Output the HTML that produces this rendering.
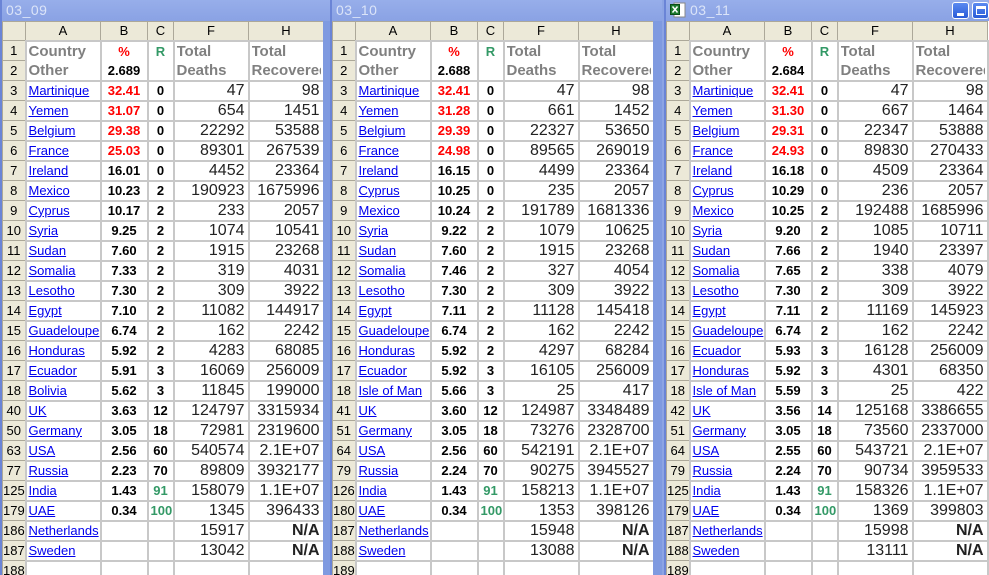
<!DOCTYPE html>
<html><head><meta charset="utf-8"><style>
*{margin:0;padding:0;box-sizing:border-box}
body{width:989px;height:575px;overflow:hidden;background:#8ca4e4;font-family:"Liberation Sans",Arial,sans-serif;position:relative}
.win{position:absolute;top:0;height:575px;width:332px;overflow:hidden;background:#7f9ae0;border-left:2px solid #6a84d6}
.title{position:absolute;left:0;top:0;width:100%;height:21px;background:linear-gradient(#97aeea,#8aa2e4);color:#dbe4f8;font-size:14px;line-height:20px;padding-left:4px;letter-spacing:0.5px}
.grid{position:absolute;left:0;top:21px;width:321px;height:560px;background:#fff;overflow:hidden}
table{border-collapse:collapse;table-layout:fixed;width:321px}
td{border:2px solid #c8c8c8;height:20px;padding:0 2px;white-space:nowrap;overflow:hidden;font-size:13px;line-height:16px}
tr.h td{background:#ece9d8;border:1px solid #aca899;height:19px;text-align:center;font-size:13px;color:#000}
td.rh{background:#ece9d8;border:1px solid #aca899;text-align:center;font-size:13px;padding:0;color:#000}
td.a a{color:#0000ee;text-decoration:underline}
td.b{text-align:center;font-weight:bold}
td.c{text-align:center;font-weight:bold}
td.r{color:#ff0000}
td.g{color:#339966}
td.n{text-align:right;font-size:16px;color:#222;padding-right:3px}
td.hd{color:#808080;font-weight:bold;font-size:15px;vertical-align:top;padding:0 2px}
td.hd div,td.tp div{height:38px;line-height:19px;overflow:hidden;white-space:nowrap}
td.tp{vertical-align:top}
td.na{font-weight:bold}
.btn{position:absolute;top:2px;width:17px;height:17px;border:1px solid #fff;border-radius:3px;background:linear-gradient(#5b8af0,#2a5bd8)}
</style></head><body>

<div class="win" style="left:0">
<div class="title">03_09</div>
<div class="grid"><table>
<colgroup><col style="width:23px"><col style="width:75px"><col style="width:47px"><col style="width:26px"><col style="width:75px"><col style="width:75px"></colgroup>
<tr class="h"><td></td><td>A</td><td>B</td><td>C</td><td>F</td><td>H</td></tr>
<tr><td class="rh">1</td><td class="hd" rowspan="2"><div>Country<br>Other</div></td><td class="b tp" rowspan="2"><div><span style="color:#f00">%</span><br>2.689</div></td><td class="c g tp" rowspan="2"><div>R</div></td><td class="hd" rowspan="2"><div>Total<br>Deaths</div></td><td class="hd" rowspan="2"><div>Total<br>Recovered</div></td></tr>
<tr><td class="rh">2</td></tr>
<tr><td class="rh">3</td><td class="a"><a>Martinique</a></td><td class="b r">32.41</td><td class="c">0</td><td class="n">47</td><td class="n">98</td></tr>
<tr><td class="rh">4</td><td class="a"><a>Yemen</a></td><td class="b r">31.07</td><td class="c">0</td><td class="n">654</td><td class="n">1451</td></tr>
<tr><td class="rh">5</td><td class="a"><a>Belgium</a></td><td class="b r">29.38</td><td class="c">0</td><td class="n">22292</td><td class="n">53588</td></tr>
<tr><td class="rh">6</td><td class="a"><a>France</a></td><td class="b r">25.03</td><td class="c">0</td><td class="n">89301</td><td class="n">267539</td></tr>
<tr><td class="rh">7</td><td class="a"><a>Ireland</a></td><td class="b">16.01</td><td class="c">0</td><td class="n">4452</td><td class="n">23364</td></tr>
<tr><td class="rh">8</td><td class="a"><a>Mexico</a></td><td class="b">10.23</td><td class="c">2</td><td class="n">190923</td><td class="n">1675996</td></tr>
<tr><td class="rh">9</td><td class="a"><a>Cyprus</a></td><td class="b">10.17</td><td class="c">2</td><td class="n">233</td><td class="n">2057</td></tr>
<tr><td class="rh">10</td><td class="a"><a>Syria</a></td><td class="b">9.25</td><td class="c">2</td><td class="n">1074</td><td class="n">10541</td></tr>
<tr><td class="rh">11</td><td class="a"><a>Sudan</a></td><td class="b">7.60</td><td class="c">2</td><td class="n">1915</td><td class="n">23268</td></tr>
<tr><td class="rh">12</td><td class="a"><a>Somalia</a></td><td class="b">7.33</td><td class="c">2</td><td class="n">319</td><td class="n">4031</td></tr>
<tr><td class="rh">13</td><td class="a"><a>Lesotho</a></td><td class="b">7.30</td><td class="c">2</td><td class="n">309</td><td class="n">3922</td></tr>
<tr><td class="rh">14</td><td class="a"><a>Egypt</a></td><td class="b">7.10</td><td class="c">2</td><td class="n">11082</td><td class="n">144917</td></tr>
<tr><td class="rh">15</td><td class="a"><a>Guadeloupe</a></td><td class="b">6.74</td><td class="c">2</td><td class="n">162</td><td class="n">2242</td></tr>
<tr><td class="rh">16</td><td class="a"><a>Honduras</a></td><td class="b">5.92</td><td class="c">2</td><td class="n">4283</td><td class="n">68085</td></tr>
<tr><td class="rh">17</td><td class="a"><a>Ecuador</a></td><td class="b">5.91</td><td class="c">3</td><td class="n">16069</td><td class="n">256009</td></tr>
<tr><td class="rh">18</td><td class="a"><a>Bolivia</a></td><td class="b">5.62</td><td class="c">3</td><td class="n">11845</td><td class="n">199000</td></tr>
<tr><td class="rh">40</td><td class="a"><a>UK</a></td><td class="b">3.63</td><td class="c">12</td><td class="n">124797</td><td class="n">3315934</td></tr>
<tr><td class="rh">50</td><td class="a"><a>Germany</a></td><td class="b">3.05</td><td class="c">18</td><td class="n">72981</td><td class="n">2319600</td></tr>
<tr><td class="rh">63</td><td class="a"><a>USA</a></td><td class="b">2.56</td><td class="c">60</td><td class="n">540574</td><td class="n">2.1E+07</td></tr>
<tr><td class="rh">77</td><td class="a"><a>Russia</a></td><td class="b">2.23</td><td class="c">70</td><td class="n">89809</td><td class="n">3932177</td></tr>
<tr><td class="rh">125</td><td class="a"><a>India</a></td><td class="b">1.43</td><td class="c g">91</td><td class="n">158079</td><td class="n">1.1E+07</td></tr>
<tr><td class="rh">179</td><td class="a"><a>UAE</a></td><td class="b">0.34</td><td class="c g">100</td><td class="n">1345</td><td class="n">396433</td></tr>
<tr><td class="rh">186</td><td class="a"><a>Netherlands</a></td><td></td><td></td><td class="n">15917</td><td class="n na">N/A</td></tr>
<tr><td class="rh">187</td><td class="a"><a>Sweden</a></td><td></td><td></td><td class="n">13042</td><td class="n na">N/A</td></tr>
<tr><td class="rh">188</td><td></td><td></td><td></td><td></td><td></td></tr>
</table></div>
</div>

<div class="win" style="left:330px">
<div class="title">03_10</div>
<div class="grid"><table>
<colgroup><col style="width:23px"><col style="width:75px"><col style="width:47px"><col style="width:26px"><col style="width:75px"><col style="width:75px"></colgroup>
<tr class="h"><td></td><td>A</td><td>B</td><td>C</td><td>F</td><td>H</td></tr>
<tr><td class="rh">1</td><td class="hd" rowspan="2"><div>Country<br>Other</div></td><td class="b tp" rowspan="2"><div><span style="color:#f00">%</span><br>2.688</div></td><td class="c g tp" rowspan="2"><div>R</div></td><td class="hd" rowspan="2"><div>Total<br>Deaths</div></td><td class="hd" rowspan="2"><div>Total<br>Recovered</div></td></tr>
<tr><td class="rh">2</td></tr>
<tr><td class="rh">3</td><td class="a"><a>Martinique</a></td><td class="b r">32.41</td><td class="c">0</td><td class="n">47</td><td class="n">98</td></tr>
<tr><td class="rh">4</td><td class="a"><a>Yemen</a></td><td class="b r">31.28</td><td class="c">0</td><td class="n">661</td><td class="n">1452</td></tr>
<tr><td class="rh">5</td><td class="a"><a>Belgium</a></td><td class="b r">29.39</td><td class="c">0</td><td class="n">22327</td><td class="n">53650</td></tr>
<tr><td class="rh">6</td><td class="a"><a>France</a></td><td class="b r">24.98</td><td class="c">0</td><td class="n">89565</td><td class="n">269019</td></tr>
<tr><td class="rh">7</td><td class="a"><a>Ireland</a></td><td class="b">16.15</td><td class="c">0</td><td class="n">4499</td><td class="n">23364</td></tr>
<tr><td class="rh">8</td><td class="a"><a>Cyprus</a></td><td class="b">10.25</td><td class="c">0</td><td class="n">235</td><td class="n">2057</td></tr>
<tr><td class="rh">9</td><td class="a"><a>Mexico</a></td><td class="b">10.24</td><td class="c">2</td><td class="n">191789</td><td class="n">1681336</td></tr>
<tr><td class="rh">10</td><td class="a"><a>Syria</a></td><td class="b">9.22</td><td class="c">2</td><td class="n">1079</td><td class="n">10625</td></tr>
<tr><td class="rh">11</td><td class="a"><a>Sudan</a></td><td class="b">7.60</td><td class="c">2</td><td class="n">1915</td><td class="n">23268</td></tr>
<tr><td class="rh">12</td><td class="a"><a>Somalia</a></td><td class="b">7.46</td><td class="c">2</td><td class="n">327</td><td class="n">4054</td></tr>
<tr><td class="rh">13</td><td class="a"><a>Lesotho</a></td><td class="b">7.30</td><td class="c">2</td><td class="n">309</td><td class="n">3922</td></tr>
<tr><td class="rh">14</td><td class="a"><a>Egypt</a></td><td class="b">7.11</td><td class="c">2</td><td class="n">11128</td><td class="n">145418</td></tr>
<tr><td class="rh">15</td><td class="a"><a>Guadeloupe</a></td><td class="b">6.74</td><td class="c">2</td><td class="n">162</td><td class="n">2242</td></tr>
<tr><td class="rh">16</td><td class="a"><a>Honduras</a></td><td class="b">5.92</td><td class="c">2</td><td class="n">4297</td><td class="n">68284</td></tr>
<tr><td class="rh">17</td><td class="a"><a>Ecuador</a></td><td class="b">5.92</td><td class="c">3</td><td class="n">16105</td><td class="n">256009</td></tr>
<tr><td class="rh">18</td><td class="a"><a>Isle of Man</a></td><td class="b">5.66</td><td class="c">3</td><td class="n">25</td><td class="n">417</td></tr>
<tr><td class="rh">41</td><td class="a"><a>UK</a></td><td class="b">3.60</td><td class="c">12</td><td class="n">124987</td><td class="n">3348489</td></tr>
<tr><td class="rh">51</td><td class="a"><a>Germany</a></td><td class="b">3.05</td><td class="c">18</td><td class="n">73276</td><td class="n">2328700</td></tr>
<tr><td class="rh">64</td><td class="a"><a>USA</a></td><td class="b">2.56</td><td class="c">60</td><td class="n">542191</td><td class="n">2.1E+07</td></tr>
<tr><td class="rh">79</td><td class="a"><a>Russia</a></td><td class="b">2.24</td><td class="c">70</td><td class="n">90275</td><td class="n">3945527</td></tr>
<tr><td class="rh">126</td><td class="a"><a>India</a></td><td class="b">1.43</td><td class="c g">91</td><td class="n">158213</td><td class="n">1.1E+07</td></tr>
<tr><td class="rh">180</td><td class="a"><a>UAE</a></td><td class="b">0.34</td><td class="c g">100</td><td class="n">1353</td><td class="n">398126</td></tr>
<tr><td class="rh">187</td><td class="a"><a>Netherlands</a></td><td></td><td></td><td class="n">15948</td><td class="n na">N/A</td></tr>
<tr><td class="rh">188</td><td class="a"><a>Sweden</a></td><td></td><td></td><td class="n">13088</td><td class="n na">N/A</td></tr>
<tr><td class="rh">189</td><td></td><td></td><td></td><td></td><td></td></tr>
</table></div>
</div>

<div class="win" style="left:664px;width:325px">
<div class="title" style="padding-left:24px">03_11</div>
<svg style="position:absolute;left:4px;top:2px" width="16" height="16" viewBox="0 0 16 16"><rect x="4" y="1" width="11" height="14" fill="#fff" stroke="#888"/><rect x="0.5" y="2.5" width="9" height="10" fill="#1e7b2e" stroke="#0b4d18"/><path d="M2.5 4.5 L7.5 10.5 M7.5 4.5 L2.5 10.5" stroke="#fff" stroke-width="1.5"/></svg>
<div class="btn" style="left:286px"><div style="position:absolute;left:4px;top:10px;width:7px;height:3px;background:#fff"></div></div>
<div class="btn" style="left:306px"><div style="position:absolute;left:3px;top:3px;width:10px;height:9px;border:1px solid #fff;border-top:3px solid #fff"></div></div>
<div class="grid" style="width:330px"><table>
<colgroup><col style="width:23px"><col style="width:75px"><col style="width:47px"><col style="width:26px"><col style="width:75px"><col style="width:75px"></colgroup>
<tr class="h"><td></td><td>A</td><td>B</td><td>C</td><td>F</td><td>H</td></tr>
<tr><td class="rh">1</td><td class="hd" rowspan="2"><div>Country<br>Other</div></td><td class="b tp" rowspan="2"><div><span style="color:#f00">%</span><br>2.684</div></td><td class="c g tp" rowspan="2"><div>R</div></td><td class="hd" rowspan="2"><div>Total<br>Deaths</div></td><td class="hd" rowspan="2"><div>Total<br>Recovered</div></td></tr>
<tr><td class="rh">2</td></tr>
<tr><td class="rh">3</td><td class="a"><a>Martinique</a></td><td class="b r">32.41</td><td class="c">0</td><td class="n">47</td><td class="n">98</td></tr>
<tr><td class="rh">4</td><td class="a"><a>Yemen</a></td><td class="b r">31.30</td><td class="c">0</td><td class="n">667</td><td class="n">1464</td></tr>
<tr><td class="rh">5</td><td class="a"><a>Belgium</a></td><td class="b r">29.31</td><td class="c">0</td><td class="n">22347</td><td class="n">53888</td></tr>
<tr><td class="rh">6</td><td class="a"><a>France</a></td><td class="b r">24.93</td><td class="c">0</td><td class="n">89830</td><td class="n">270433</td></tr>
<tr><td class="rh">7</td><td class="a"><a>Ireland</a></td><td class="b">16.18</td><td class="c">0</td><td class="n">4509</td><td class="n">23364</td></tr>
<tr><td class="rh">8</td><td class="a"><a>Cyprus</a></td><td class="b">10.29</td><td class="c">0</td><td class="n">236</td><td class="n">2057</td></tr>
<tr><td class="rh">9</td><td class="a"><a>Mexico</a></td><td class="b">10.25</td><td class="c">2</td><td class="n">192488</td><td class="n">1685996</td></tr>
<tr><td class="rh">10</td><td class="a"><a>Syria</a></td><td class="b">9.20</td><td class="c">2</td><td class="n">1085</td><td class="n">10711</td></tr>
<tr><td class="rh">11</td><td class="a"><a>Sudan</a></td><td class="b">7.66</td><td class="c">2</td><td class="n">1940</td><td class="n">23397</td></tr>
<tr><td class="rh">12</td><td class="a"><a>Somalia</a></td><td class="b">7.65</td><td class="c">2</td><td class="n">338</td><td class="n">4079</td></tr>
<tr><td class="rh">13</td><td class="a"><a>Lesotho</a></td><td class="b">7.30</td><td class="c">2</td><td class="n">309</td><td class="n">3922</td></tr>
<tr><td class="rh">14</td><td class="a"><a>Egypt</a></td><td class="b">7.11</td><td class="c">2</td><td class="n">11169</td><td class="n">145923</td></tr>
<tr><td class="rh">15</td><td class="a"><a>Guadeloupe</a></td><td class="b">6.74</td><td class="c">2</td><td class="n">162</td><td class="n">2242</td></tr>
<tr><td class="rh">16</td><td class="a"><a>Ecuador</a></td><td class="b">5.93</td><td class="c">3</td><td class="n">16128</td><td class="n">256009</td></tr>
<tr><td class="rh">17</td><td class="a"><a>Honduras</a></td><td class="b">5.92</td><td class="c">3</td><td class="n">4301</td><td class="n">68350</td></tr>
<tr><td class="rh">18</td><td class="a"><a>Isle of Man</a></td><td class="b">5.59</td><td class="c">3</td><td class="n">25</td><td class="n">422</td></tr>
<tr><td class="rh">42</td><td class="a"><a>UK</a></td><td class="b">3.56</td><td class="c">14</td><td class="n">125168</td><td class="n">3386655</td></tr>
<tr><td class="rh">51</td><td class="a"><a>Germany</a></td><td class="b">3.05</td><td class="c">18</td><td class="n">73560</td><td class="n">2337000</td></tr>
<tr><td class="rh">64</td><td class="a"><a>USA</a></td><td class="b">2.55</td><td class="c">60</td><td class="n">543721</td><td class="n">2.1E+07</td></tr>
<tr><td class="rh">79</td><td class="a"><a>Russia</a></td><td class="b">2.24</td><td class="c">70</td><td class="n">90734</td><td class="n">3959533</td></tr>
<tr><td class="rh">125</td><td class="a"><a>India</a></td><td class="b">1.43</td><td class="c g">91</td><td class="n">158326</td><td class="n">1.1E+07</td></tr>
<tr><td class="rh">179</td><td class="a"><a>UAE</a></td><td class="b">0.34</td><td class="c g">100</td><td class="n">1369</td><td class="n">399803</td></tr>
<tr><td class="rh">187</td><td class="a"><a>Netherlands</a></td><td></td><td></td><td class="n">15998</td><td class="n na">N/A</td></tr>
<tr><td class="rh">188</td><td class="a"><a>Sweden</a></td><td></td><td></td><td class="n">13111</td><td class="n na">N/A</td></tr>
<tr><td class="rh">189</td><td></td><td></td><td></td><td></td><td></td></tr>
</table></div>
</div>
</body></html>
